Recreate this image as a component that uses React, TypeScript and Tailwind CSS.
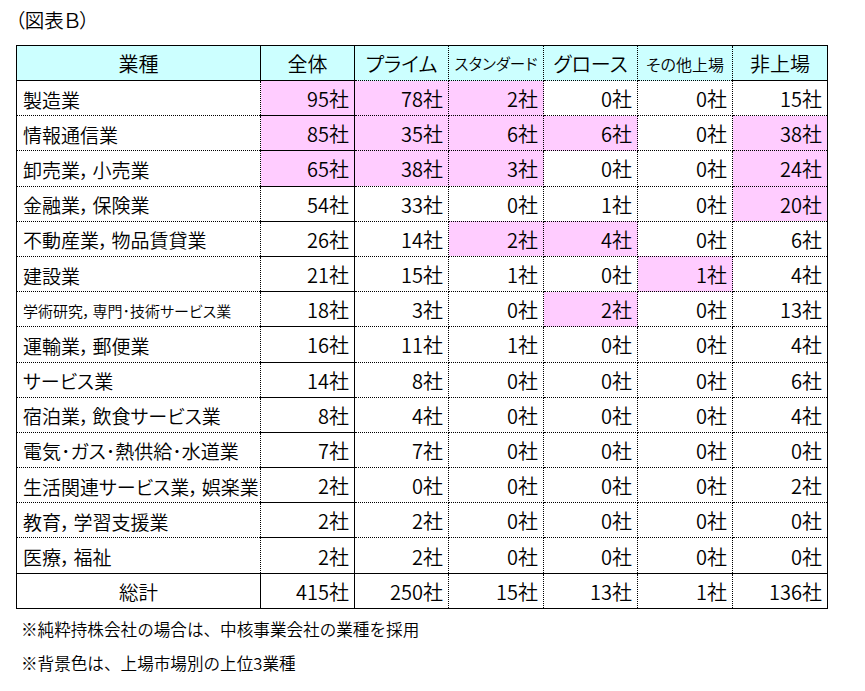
import React from "react";

type Row = { name: string; small?: boolean; vals: number[]; pink: boolean[] };

const F = false;
const T = true;

const rows: Row[] = [
  { name: "製造業", vals: [95, 78, 2, 0, 0, 15], pink: [T, T, T, F, F, F] },
  { name: "情報通信業", vals: [85, 35, 6, 6, 0, 38], pink: [T, T, T, T, F, T] },
  { name: "卸売業，小売業", vals: [65, 38, 3, 0, 0, 24], pink: [T, T, T, F, F, T] },
  { name: "金融業，保険業", vals: [54, 33, 0, 1, 0, 20], pink: [F, F, F, F, F, T] },
  { name: "不動産業，物品賃貸業", vals: [26, 14, 2, 4, 0, 6], pink: [F, F, T, T, F, F] },
  { name: "建設業", vals: [21, 15, 1, 0, 1, 4], pink: [F, F, F, F, T, F] },
  { name: "学術研究，専門･技術サービス業", small: true, vals: [18, 3, 0, 2, 0, 13], pink: [F, F, F, T, F, F] },
  { name: "運輸業，郵便業", vals: [16, 11, 1, 0, 0, 4], pink: [F, F, F, F, F, F] },
  { name: "サービス業", vals: [14, 8, 0, 0, 0, 6], pink: [F, F, F, F, F, F] },
  { name: "宿泊業，飲食サービス業", vals: [8, 4, 0, 0, 0, 4], pink: [F, F, F, F, F, F] },
  { name: "電気･ガス･熱供給･水道業", vals: [7, 7, 0, 0, 0, 0], pink: [F, F, F, F, F, F] },
  { name: "生活関連サービス業，娯楽業", vals: [2, 0, 0, 0, 0, 2], pink: [F, F, F, F, F, F] },
  { name: "教育，学習支援業", vals: [2, 2, 0, 0, 0, 0], pink: [F, F, F, F, F, F] },
  { name: "医療，福祉", vals: [2, 2, 0, 0, 0, 0], pink: [F, F, F, F, F, F] },
];

const totals = [415, 250, 15, 13, 1, 136];

const font = "font-['Noto_Sans_CJK_JP',sans-serif] font-[350]";
const palt = "[font-feature-settings:'palt']";

function rightBorder(i: number) {
  return i === 0 ? "border-r border-r-black border-solid" : "border-r border-r-black border-dotted";
}

function Name({ text, small }: { text: string; small?: boolean }) {
  const parts = text.split("，");
  return (
    <>
      {parts.map((p, i) => (
        <React.Fragment key={i}>
          {i > 0 && <span className={small ? "mr-[2px]" : "mr-[3px]"}>，</span>}
          {p}
        </React.Fragment>
      ))}
    </>
  );
}

export default function App() {
  return (
    <div className={`w-[865px] h-[691px] bg-white text-black ${font}`}>
      <div className={`h-[45px] pl-[15px] pt-[7px] text-[19.5px] leading-[26px] ${palt}`}>（図表Ｂ）</div>
      <table className={`ml-[16px] w-[811px] table-fixed border-collapse border border-black text-[20px] leading-none ${palt}`}>
        <colgroup>
          <col className="w-[244px]" />
          <col className="w-[94px]" />
          <col className="w-[94px]" />
          <col className="w-[95px]" />
          <col className="w-[94px]" />
          <col className="w-[95px]" />
          <col className="w-[95px]" />
        </colgroup>
        <thead>
          <tr className="h-[35px] bg-[#ccffff]">
            <th className="font-[350] text-center border-r border-r-black border-b border-b-black pt-[2px]">業種</th>
            <th className="font-[350] text-center border-r border-r-black border-b border-b-black pt-[2px]">全体</th>
            <th className="font-[350] text-center border-r border-dotted border-r-black border-b border-b-black pt-[2px]">プライム</th>
            <th className="font-[350] text-center border-r border-dotted border-r-black border-b border-b-black text-[15.5px] pt-[2px]">スタンダード</th>
            <th className="font-[350] text-center border-r border-dotted border-r-black border-b border-b-black pt-[2px]">グロース</th>
            <th className="font-[350] text-center border-r border-dotted border-r-black border-b border-b-black text-[16px] pt-[2px]">その他上場</th>
            <th className="font-[350] text-center border-b border-b-black pt-[2px]">非上場</th>
          </tr>
        </thead>
        <tbody>
          {rows.map((r, ri) => (
            <tr key={ri} className="h-[35.2px]">
              <td
                className={`border-r border-r-black border-b border-dotted border-b-black pl-[6px] pt-[2px] whitespace-nowrap ${
                  r.small ? "text-[15px]" : "text-[19px]"
                }`}
              >
                <Name text={r.name} small={r.small} />
              </td>
              {r.vals.map((v, i) => (
                <td
                  key={i}
                  className={`text-right pr-[5px] pt-[2px] border-b border-dotted border-b-black ${
                    i < 5 ? rightBorder(i) : ""
                  } ${r.pink[i] ? "bg-[#ffccff]" : ""}`}
                >
                  {v}社
                </td>
              ))}
            </tr>
          ))}
          <tr className="h-[35.2px] border-t border-t-black">
            <td className="text-center border-r border-r-black border-t border-t-black pt-[2px] text-[19.5px]">総計</td>
            {totals.map((v, i) => (
              <td
                key={i}
                className={`text-right pr-[5px] pt-[2px] border-t border-t-black ${i < 5 ? rightBorder(i) : ""}`}
              >
                {v}社
              </td>
            ))}
          </tr>
        </tbody>
      </table>
      <div className="mt-[3px] pl-[21px] text-[16.6px] leading-[34px]">
        <div>※純粋持株会社の場合は、中核事業会社の業種を採用</div>
        <div>※背景色は、上場市場別の上位3業種</div>
      </div>
    </div>
  );
}
